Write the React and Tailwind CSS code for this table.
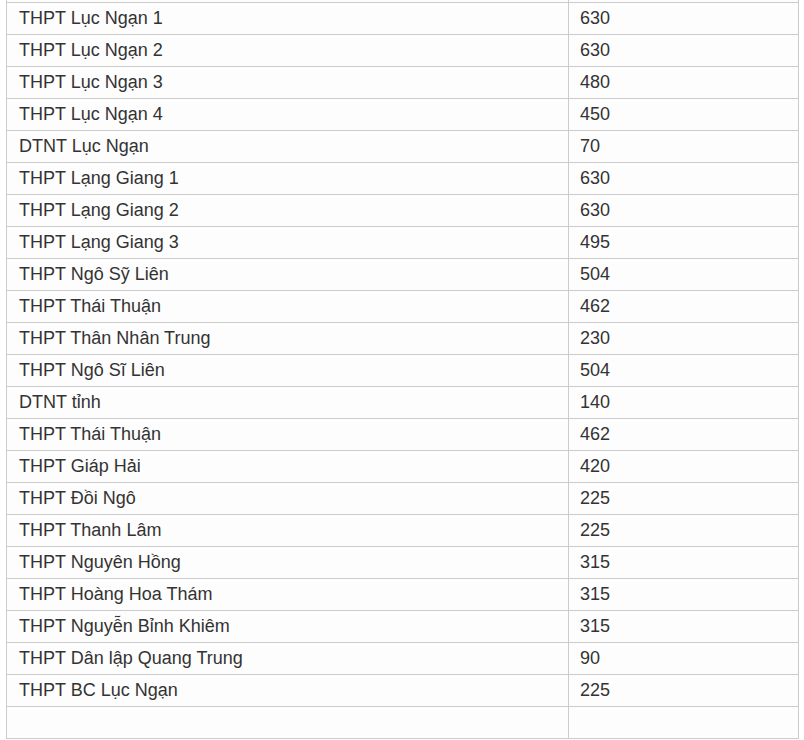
const rows = [
  ["", ""],
  ["THPT Lục Ngạn 1", "630"],
  ["THPT Lục Ngạn 2", "630"],
  ["THPT Lục Ngạn 3", "480"],
  ["THPT Lục Ngạn 4", "450"],
  ["DTNT Lục Ngạn", "70"],
  ["THPT Lạng Giang 1", "630"],
  ["THPT Lạng Giang 2", "630"],
  ["THPT Lạng Giang 3", "495"],
  ["THPT Ngô Sỹ Liên", "504"],
  ["THPT Thái Thuận", "462"],
  ["THPT Thân Nhân Trung", "230"],
  ["THPT Ngô Sĩ Liên", "504"],
  ["DTNT tỉnh", "140"],
  ["THPT Thái Thuận", "462"],
  ["THPT Giáp Hải", "420"],
  ["THPT Đồi Ngô", "225"],
  ["THPT Thanh Lâm", "225"],
  ["THPT Nguyên Hồng", "315"],
  ["THPT Hoàng Hoa Thám", "315"],
  ["THPT Nguyễn Bỉnh Khiêm", "315"],
  ["THPT Dân lập Quang Trung", "90"],
  ["THPT BC Lục Ngạn", "225"],
  ["", ""],
];

export default function App() {
  return (
    <div className="h-[740px] overflow-hidden bg-white">
      <div
        className="ml-[6px] mt-[-29px] w-[793px] border-l border-r border-[#cccccc] bg-[#fdfdfd] text-[18px] text-[#333333]"
        style={{ fontFamily: '"Liberation Sans", Arial, sans-serif' }}
      >
        {rows.map(([name, count], i) => (
          <div
            key={i}
            className="grid h-[32px] grid-cols-[562px_1fr] border-b border-[#cccccc]"
          >
            <div className="flex items-center border-r border-[#cccccc] pl-[12px]">
              {name}
            </div>
            <div className="flex items-center pl-[11px]">{count}</div>
          </div>
        ))}
      </div>
    </div>
  );
}
